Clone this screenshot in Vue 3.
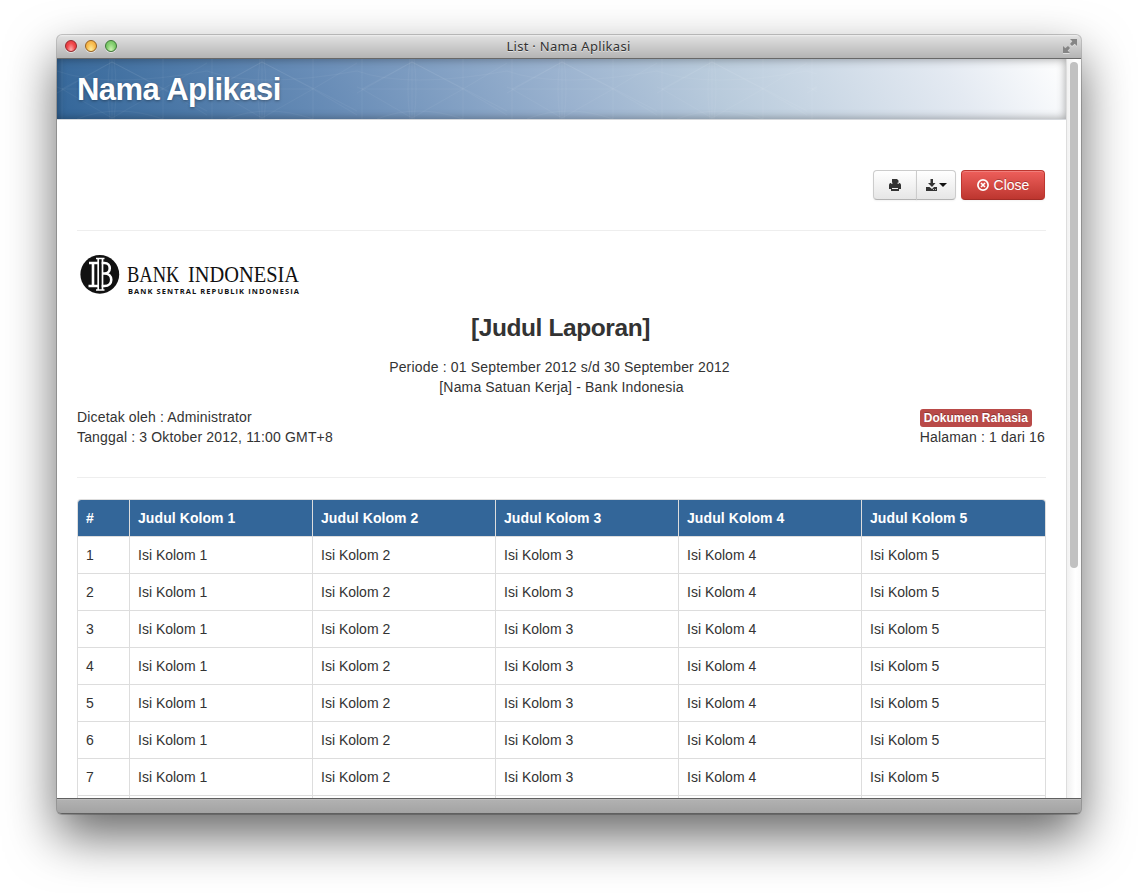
<script setup>
const columns = [1, 2, 3, 4, 5]
const rows = [1, 2, 3, 4, 5, 6, 7]
</script>

<template>
  <div class="desktop">
    <div class="window">
      <div class="titlebar">
        <div class="lights"><i class="red"></i><i class="yellow"></i><i class="green"></i></div>
        <span class="window-title">List · Nama Aplikasi</span>
        <svg class="expand" width="14" height="14" viewBox="0 0 14 14">
          <path d="M14 0V7L11.700 4.700L9 7L7 5L9.300 2.300L7 0Z M0 14V7L2.300 9.300L5 7L7 9L4.700 11.700L7 14Z" fill="#858585" />
        </svg>
      </div>

      <div class="viewport">
        <div class="page">
          <header class="banner">
            <svg class="pattern" width="1009" height="60" viewBox="0 0 1009 60">
              <defs>
                <pattern id="lattice" width="150" height="60" patternUnits="userSpaceOnUse">
                  <path d="M55 0V60M106 0V60M5 0V60M55 3L5 30L55 59L106 30ZM55 3L150 52M55 3L0 34M106 30L150 4M106 30L150 56M5 30L0 28M5 30H106M53 0Q49 30 53 60M57 0Q61 30 57 60M20 60Q60 44 106 60M0 12Q50 30 150 12" fill="none" stroke="#fff" stroke-opacity=".045" />
                </pattern>
              </defs>
              <rect width="760" height="60" fill="url(#lattice)" />
            </svg>
            <h1>Nama Aplikasi</h1>
          </header>

          <main>
            <div class="toolbar">
              <div class="group">
                <button class="btn print">
                  <svg width="12" height="12" viewBox="0 0 12 12">
                    <path d="M3 0H8L9.500 1.500V4H3ZM1.500 4H10.500Q12 4.500 12 6V10H10V12H2V10H0V6Q0 4.500 1.500 4Z" fill="#333" />
                    <path d="M2 4.200H3.500M8.500 4.200H10M3 9.500H9" stroke="#f2f2f2" />
                  </svg>
                </button>
                <button class="btn download">
                  <svg width="12" height="12" viewBox="0 0 12 12">
                    <path d="M4.500 0H7V4H9.500L6 8L2 4H4.500ZM0 8H3.500L6 10L8 8H11V12H0Z" fill="#333" />
                    <path d="M7 10.500H8M9 10.500H10" stroke="#bbb" />
                  </svg>
                  <b class="caret"></b>
                </button>
              </div>
              <button class="btn close">
                <svg width="12" height="12" viewBox="0 0 12 12" fill="none" stroke="#fff">
                  <circle cx="6" cy="6" r="5.100" stroke-width="1.700" />
                  <path d="M4 4L8 8M8 4L4 8" stroke-width="1.600" />
                </svg>
                <span>Close</span>
              </button>
            </div>

            <hr />

            <svg class="logo" width="230" height="50" viewBox="0 0 230 50">
              <circle cx="22.800" cy="23.400" r="19.400" fill="#111" />
              <g fill="none" stroke="#fff">
                <path d="M12 12H27.500C34.500 12 34.500 22.500 27.500 22.500C36.500 22.500 36.500 35 27.500 35H11.500M16 12V35M26 22.500H29" stroke-width="2.600" />
                <path d="M23.200 8V39" stroke="#111" stroke-width="3" />
                <path d="M19 7.500H27.500M19 39H27.500M21.200 8V39M25.500 8V39" stroke-width="1.700" />
              </g>
              <text class="logo-name" x="50" y="30.500" textLength="52.500" lengthAdjust="spacingAndGlyphs">BANK</text>
              <text class="logo-name" x="111" y="30.500" textLength="111" lengthAdjust="spacingAndGlyphs">INDONESIA</text>
              <text class="logo-sub" x="51" y="42.500" textLength="171">BANK SENTRAL REPUBLIK INDONESIA</text>
            </svg>

            <h2>[Judul Laporan]</h2>
            <p class="period"><span class="dates">Periode : 01 September 2012 s/d 30 September 2012</span><br /><span>[Nama Satuan Kerja] - Bank Indonesia</span></p>

            <div class="meta">
              <div><span>Dicetak oleh : Administrator</span><br /><span>Tanggal : 3 Oktober 2012, 11:00 GMT+8</span></div>
              <div class="right"><span class="label">Dokumen Rahasia</span><br /><span>Halaman : 1 dari 16</span></div>
            </div>

            <hr class="second" />

            <table>
              <colgroup><col class="num" /><col v-for="c in 4" :key="c" class="col" /><col /></colgroup>
              <thead>
                <tr><th>#</th><th v-for="c in columns" :key="c">Judul Kolom {{ c }}</th></tr>
              </thead>
              <tbody>
                <tr v-for="r in rows" :key="r">
                  <td>{{ r }}</td><td v-for="c in columns" :key="c">Isi Kolom {{ c }}</td>
                </tr>
                <tr><td v-for="c in 6" :key="c"></td></tr>
              </tbody>
            </table>
          </main>
        </div>
        <div class="scrollbar"><div class="thumb"></div></div>
      </div>
      <div class="bottombar"></div>
    </div>
  </div>
</template>

<style>
html, body { overflow: hidden; background: #fff; }
</style>

<style scoped>
.desktop { height: 893px; box-sizing: border-box; padding: 35px 57px 0; overflow: hidden; font-family: "Liberation Sans", Arial, sans-serif; font-size: 14px; line-height: 20px; color: #333; }
.window { width: 1024px; height: 779px; display: flex; flex-direction: column; border-radius: 5px; box-shadow: 0 0 0 1px rgba(0,0,0,.2), 0 22px 50px rgba(0,0,0,.6); background: #aaa; overflow: hidden; }
.titlebar { position: relative; height: 24px; box-sizing: border-box; flex: none; display: flex; align-items: center; padding: 0 4px 1px 8px; background: linear-gradient(#f0f0f0 0, #dedede 2px, #b4b4b4); border-bottom: 1px solid #686868; }
.lights { display: flex; gap: 8px; width: 100px; }
.lights i { width: 12px; height: 12px; border-radius: 50%; box-sizing: border-box; border: 1px solid; box-shadow: 0 1px 0 #fff8; }
.red { background: radial-gradient(ellipse at 50% 90%, #ffb0b0, #f0484c 55%, #e2333a); border-color: #93262a !important; }
.yellow { background: radial-gradient(ellipse at 50% 90%, #fff0a0, #f8bd50 55%, #efa539); border-color: #96601f !important; }
.green { background: radial-gradient(ellipse at 50% 90%, #d0f5b5, #84cf70 55%, #68bb58); border-color: #3d7535 !important; }
.window-title { flex: 1; text-align: center; padding-right: 91px; font: 13px/20px "Noto Sans", sans-serif; letter-spacing: .3px; color: #333; text-shadow: 0 1px 0 #fff8; white-space: nowrap; }
.expand { display: block; filter: drop-shadow(0 1px 0 #ddd); }
.viewport { height: 739px; flex: none; display: flex; overflow: hidden; background: #fff; }
.page { width: 1009px; overflow: hidden; }
.scrollbar { width: 15px; box-sizing: border-box; padding: 3px 3px 0 3px; border-left: 1px solid #ddd; background: linear-gradient(90deg, #f1f1f1, #fff 60%, #fafafa); }
.thumb { width: 8px; height: 506px; border-radius: 4px; background: #c1c1c1; }
.bottombar { flex: 1; border-top: 1px solid #606060; border-bottom: 1px solid #606060; background: linear-gradient(#c8c8c8 0, #b1b1b1 1px, #a3a3a3); border-radius: 0 0 4px 4px; }
.banner { position: relative; height: 60px; border-bottom: 1px solid #d5d8dc; background: linear-gradient(60deg, #336699 0%, #6a8eb8 28%, #9ab2cf 50%, #b9cbdc 65%, #e4eaf2 88%, #fff 100%); box-shadow: inset 0 0 10px rgba(0,0,0,.38); }
.pattern { position: absolute; inset: 0; }
h1 { position: relative; margin: 0; padding: 11px 20px 9px; font-size: 31px; line-height: 40px; letter-spacing: -.54px; color: #fff; text-shadow: 0 1px 3px rgba(0,0,0,.35); }
main { padding: 50px 20px 0; }
.toolbar { display: flex; justify-content: flex-end; gap: 5px; height: 30px; padding-right: 1px; }
.group { display: flex; }
.btn { height: 30px; box-sizing: border-box; display: flex; align-items: center; justify-content: center; padding: 0; border: 1px solid #ccc; border-bottom-color: #b3b3b3; background: linear-gradient(#fff, #e6e6e6); box-shadow: inset 0 1px 0 #fff3, 0 1px 2px #0000000d; font: inherit; }
.print { width: 44px; border-radius: 4px 0 0 4px; }
.download { width: 40px; margin-left: -1px; border-radius: 0 4px 4px 0; gap: 1px; }
.caret { border: 4px solid transparent; border-top-color: #111; border-bottom: 0; margin-top: -1px; }
.close { width: 84px; gap: 5px; border-radius: 4px; color: #fff; border-color: #bd362f #bd362f #a32c27; background: linear-gradient(#ee5f5b, #bd362f); text-shadow: 0 -1px 0 #0004; }
hr { margin: 30px 0 20px; border: 0; border-top: 1px solid #eee; }
.logo { display: block; overflow: visible; }
.logo-name { font: 23px "Liberation Serif", serif; fill: #111; }
.logo-sub { font: bold 7.5px "Open Sans", sans-serif; fill: #111; }
h2 { margin: 7px 0 9px; font-size: 24.500px; line-height: 40px; letter-spacing: -.4px; text-align: center; padding-right: 2px; }
.period { margin: 0 0 10px; text-align: center; letter-spacing: .15px; }
.dates { margin-right: 4px; letter-spacing: .17px; }
.meta { display: flex; justify-content: space-between; height: 40px; padding-right: 1px; white-space: nowrap; letter-spacing: .16px; }
.label { display: inline-block; height: 18px; box-sizing: border-box; padding: 2px 4px; border-radius: 3px; background: #b94a48; color: #fff; font-size: 12px; letter-spacing: 0; font-weight: bold; line-height: 14px; vertical-align: top; margin-top: 2px; text-shadow: 0 -1px 0 #0004; }
.second { margin: 30px 0 21px; }
table { width: 969px; table-layout: fixed; border-collapse: separate; border-spacing: 0; border: 1px solid #ddd; border-left: 0; border-radius: 4px; }
th, td { height: 37px; box-sizing: border-box; padding: 8px; text-align: left; line-height: 20px; border-left: 1px solid #ddd; }
td { border-top: 1px solid #ddd; }
th { background: #336699; color: #fff; height: 36px; letter-spacing: .08px; }
.num { width: 52px; }
.col { width: 183px; }
th:first-child { border-top-left-radius: 4px; }
th:last-child { border-top-right-radius: 3px; }
</style>
